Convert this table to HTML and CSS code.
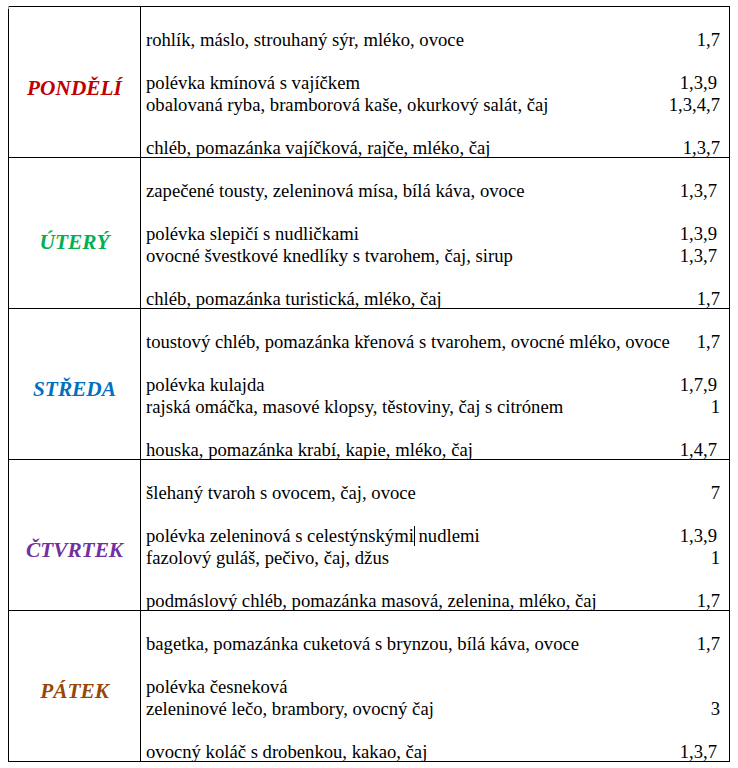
FILE: index.html
```html
<!DOCTYPE html>
<html lang="cs">
<head>
<meta charset="utf-8">
<title>Jídelníček</title>
<link rel="stylesheet" href="styles.css">
</head>
<body class="page">
<div class="sheet">
  <span class="move-handle"></span>
  <div class="menu">
    <div class="day day-mon">PONDĚLÍ</div>
    <div class="meals">
      <p class="line"></p>
      <p class="line"><span>rohlík, máslo, strouhaný sýr, mléko, ovoce</span><span>1,7</span></p>
      <p class="line"></p>
      <p class="line"><span>polévka kmínová s vajíčkem</span><span class="n-in">1,3,9</span></p>
      <p class="line"><span>obalovaná ryba, bramborová kaše, okurkový salát, čaj</span><span>1,3,4,7</span></p>
      <p class="line"></p>
      <p class="line"><span>chléb, pomazánka vajíčková, rajče, mléko, čaj</span><span>1,3,7</span></p>
    </div>
    <div class="day day-tue">ÚTERÝ</div>
    <div class="meals">
      <p class="line"></p>
      <p class="line"><span>zapečené tousty, zeleninová mísa, bílá káva, ovoce</span><span class="n-in">1,3,7</span></p>
      <p class="line"></p>
      <p class="line"><span>polévka slepičí s nudličkami</span><span class="n-in">1,3,9</span></p>
      <p class="line"><span>ovocné švestkové knedlíky s tvarohem, čaj, sirup</span><span class="n-in">1,3,7</span></p>
      <p class="line"></p>
      <p class="line"><span>chléb, pomazánka turistická, mléko, čaj</span><span>1,7</span></p>
    </div>
    <div class="day day-wed">STŘEDA</div>
    <div class="meals">
      <p class="line"></p>
      <p class="line"><span>toustový chléb, pomazánka křenová s tvarohem, ovocné mléko, ovoce</span><span>1,7</span></p>
      <p class="line"></p>
      <p class="line"><span>polévka kulajda</span><span class="n-in">1,7,9</span></p>
      <p class="line"><span>rajská omáčka, masové klopsy, těstoviny, čaj s citrónem</span><span>1</span></p>
      <p class="line"></p>
      <p class="line"><span>houska, pomazánka krabí, kapie, mléko, čaj</span><span class="n-in">1,4,7</span></p>
    </div>
    <div class="day day-thu">ČTVRTEK</div>
    <div class="meals">
      <p class="line"></p>
      <p class="line"><span>šlehaný tvaroh s ovocem, čaj, ovoce</span><span>7</span></p>
      <p class="line"></p>
      <p class="line"><span>polévka zeleninová s celestýnskými<i class="caret"></i> nudlemi</span><span class="n-in">1,3,9</span></p>
      <p class="line"><span>fazolový guláš, pečivo, čaj, džus</span><span>1</span></p>
      <p class="line"></p>
      <p class="line"><span>podmáslový chléb, pomazánka masová, zelenina, mléko, čaj</span><span>1,7</span></p>
    </div>
    <div class="day day-fri">PÁTEK</div>
    <div class="meals">
      <p class="line"></p>
      <p class="line"><span>bagetka, pomazánka cuketová s brynzou, bílá káva, ovoce</span><span>1,7</span></p>
      <p class="line"></p>
      <p class="line"><span>polévka česneková</span><span></span></p>
      <p class="line"><span>zeleninové lečo, brambory, ovocný čaj</span><span>3</span></p>
      <p class="line"></p>
      <p class="line"><span>ovocný koláč s drobenkou, kakao, čaj</span><span class="n-in">1,3,7</span></p>
    </div>
  </div>
  <span class="resize-handle"></span>
</div>
</body>
</html>
```

FILE: styles.css
```css
.page {
  margin: 6px 8px 0 8px;
  background: #ffffff;
  color: #000000;
  font-size: 18.67px;
  font-family: "Liberation Serif", serif;
}
.sheet {
  position: relative;
  width: 722px;
}
.menu {
  display: grid;
  grid-template-columns: 133px 589px;
  grid-auto-rows: 151px;
  border-top: 1px solid #000000;
  box-sizing: border-box;
  width: 722px;
}
.day {
  border-left: 1px solid #000000;
  border-right: 1px solid #000000;
  border-bottom: 1px solid #000000;
  display: flex;
  align-items: center;
  justify-content: center;
  font-family: "Liberation Serif", serif;
  font-weight: bold;
  font-style: italic;
  font-size: 21.33px;
  line-height: 24px;
}
.day-mon { color: #c00000; padding-top: 11px; }
.day-tue { color: #00b050; padding-top: 18px; }
.day-wed { color: #0070c0; padding-top: 10px; }
.day-thu { color: #7030a0; padding-top: 29px; }
.day-fri { color: #974706; padding-top: 9px; }
.meals {
  border-right: 1px solid #000000;
  border-bottom: 1px solid #000000;
  padding: 1px 9px 0 5px;
  overflow: hidden;
}
.line {
  margin: 0;
  display: flex;
  justify-content: space-between;
  height: 21.43px;
  line-height: 21.43px;
  white-space: nowrap;
  font-family: "Liberation Serif", serif;
  font-size: 18.67px;
}
.n-in {
  margin-right: 3px;
}
.caret {
  display: inline-block;
  width: 1px;
  height: 20px;
  background: #000000;
  vertical-align: -4px;
  margin-right: -1px;
}
.move-handle {
  position: absolute;
  left: -9px;
  top: -7px;
  width: 10px;
  height: 10px;
  border: 1px solid #a0a0a0;
  background: #ffffff;
  box-sizing: border-box;
}
.resize-handle {
  position: absolute;
  right: -7px;
  bottom: -6px;
  width: 7px;
  height: 7px;
  border: 1px solid #a0a0a0;
  background: #ffffff;
  box-sizing: border-box;
}
```
